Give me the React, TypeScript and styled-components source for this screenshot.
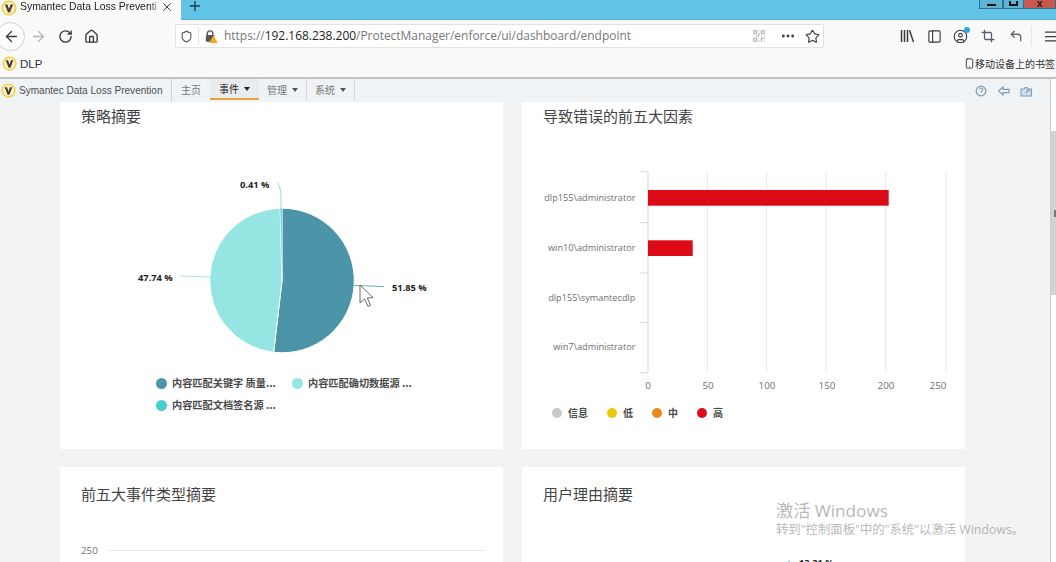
import React from 'react';
import styled, { createGlobalStyle } from 'styled-components';
import {
  ArrowLeft, ArrowRight, RotateCw, Home, Shield, MoreHorizontal, Star, QrCode,
  PanelLeft, CircleUser, Crop, CornerUpLeft, Menu, Smartphone, X, Plus,
} from 'lucide-react';

const Global = createGlobalStyle`
  html, body { margin: 0; padding: 0; background: #f3f3f3; overflow: hidden; }
  * { box-sizing: border-box; }
  #root { width: 1056px; height: 562px; }
`;

const sans = `"Liberation Sans", "Noto Sans CJK SC", sans-serif`;
const open = `"Open Sans", "Noto Sans CJK SC", sans-serif`;

const Page = styled.div`
  position: relative;
  width: 1056px;
  height: 562px;
  overflow: hidden;
  display: flex;
  flex-direction: column;
  font-family: ${sans};
`;

const TabStrip = styled.div`
  height: 20px;
  flex: none;
  display: flex;
  background: #62c5e8;
  border-bottom: 1px solid #58aecd;
`;
const Tab = styled.div`
  width: 181px;
  height: 20px;
  background: #f9f9fa;
  display: flex;
  align-items: flex-start;
  padding-left: 1px;
  color: #222;
  font-size: 10.4px;
  line-height: 13px;
`;
const TabTitle = styled.span`
  width: 139px;
  margin-left: 3px;
  white-space: nowrap;
  -webkit-mask-image: linear-gradient(90deg, #000 93%, rgba(0, 0, 0, 0.25));
  mask-image: linear-gradient(90deg, #000 93%, rgba(0, 0, 0, 0.25));
`;
const TabClose = styled.span`
  display: flex;
  margin-left: 1px;
  color: #333;
`;
const NewTab = styled.span`
  display: flex;
  margin: -2px 0 0 6px;
  height: 14px;
  color: #1c3c55;
`;
const Spacer = styled.div`
  flex: 1;
`;
const WinButton = styled.div<{ $w: number; $red?: boolean }>`
  width: ${(p) => p.$w}px;
  height: 9px;
  background: ${(p) => (p.$red ? '#c9584f' : '#5fb3d3')};
  border: 1px solid #31708c;
  border-top: none;
  border-left: ${(p) => (p.$red ? 'none' : '1px solid #31708c')};
  display: flex;
  justify-content: center;
  align-items: flex-end;
  color: #111;
`;
const MinGlyph = styled.span`
  width: 9px;
  height: 2px;
  background: #111;
  margin-bottom: 2px;
`;
const MaxGlyph = styled.span`
  width: 9px;
  height: 5px;
  border: 2px solid #111;
  border-top: none;
  margin-bottom: 2px;
`;
const CloseGlyph = styled.span`
  font: bold 11px/8px ${sans};
  color: #222;
  margin-bottom: 1px;
`;

const NavBar = styled.div`
  height: 32px;
  flex: none;
  background: #f9f9fa;
  display: flex;
  align-items: center;
`;
const BackCircle = styled.div`
  width: 29px;
  height: 29px;
  margin-left: -4px;
  border-radius: 50%;
  background: #fdfdfd;
  border: 1px solid #cfcfd2;
  display: flex;
  align-items: center;
  justify-content: center;
  padding-left: 1px;
  color: #3a3a3c;
  flex: none;
`;
const NavIcon = styled.span<{ $ml: number; $c?: string }>`
  display: flex;
  margin-left: ${(p) => p.$ml}px;
  color: ${(p) => p.$c || '#3d3d40'};
  flex: none;
`;
const UrlBar = styled.div`
  width: 649px;
  height: 24px;
  margin-left: 76px;
  flex: none;
  display: flex;
  align-items: center;
  background: #fff;
  border: 1px solid #e2e2e4;
  border-radius: 2px;
`;
const UrlDivider = styled.span`
  width: 1px;
  height: 18px;
  margin-left: 5px;
  background: #e4e4e6;
`;
const LockWrap = styled.span`
  position: relative;
  display: flex;
  width: 14px;
  height: 14px;
  margin-left: 5px;
`;
const UrlText = styled.div`
  margin-left: 6px;
  width: 526px;
  font: 11.95px/16px ${open};
  color: #77777a;
  white-space: nowrap;
`;
const UrlHost = styled.span`
  color: #1e1e20;
`;
const ToolDivider = styled.span`
  width: 1px;
  height: 20px;
  margin-left: 8px;
  background: #e6e6e8;
  flex: none;
`;
const Badge = styled.span`
  position: absolute;
  width: 6px;
  height: 6px;
  top: -2px;
  right: -2px;
  border-radius: 50%;
  background: #2aa8e0;
`;
const RelIcon = styled(NavIcon)`
  position: relative;
`;

const BookmarksBar = styled.div`
  height: 25px;
  flex: none;
  background: #f9f9fa;
  display: flex;
  align-items: center;
  padding: 0 1px 2px 2px;
  font-size: 11.5px;
  color: #333;
`;
const BookmarkLabel = styled.span`
  margin-left: 3px;
`;
const MobileMarks = styled.span`
  margin-left: auto;
  display: flex;
  align-items: center;
  font: 10px/12px ${open};
  color: #333;
  white-space: nowrap;
`;

const Viewport = styled.div`
  flex: 1;
  min-height: 0;
  display: flex;
  border-top: 2px solid #c2c2c4;
`;
const AppColumn = styled.div`
  width: 1050px;
  flex: none;
  display: flex;
  flex-direction: column;
  overflow: hidden;
`;
const Scrollbar = styled.div`
  flex: 1;
  background: #fff;
  border-left: 1px solid #c9c9c9;
  padding-top: 52px;
`;
const Thumb = styled.div`
  height: 164px;
  background: #d2d2d2;
  display: flex;
  align-items: center;
  justify-content: flex-end;
`;
const Grip = styled.span`
  width: 2px;
  height: 7px;
  background: #777;
`;
const AppNav = styled.div`
  height: 23px;
  flex: none;
  background: #eff3f6;
  display: flex;
  align-items: stretch;
  padding-left: 1px;
`;
const Brand = styled.div`
  width: 171px;
  display: flex;
  align-items: center;
  font-size: 10.05px;
  color: #4e4e4e;
  white-space: nowrap;
  border-right: 1px solid #cdd2d6;
`;
const BrandText = styled.span`
  margin-left: 3px;
`;
const NavItem = styled.div<{ $w: number; $active?: boolean; $line?: boolean }>`
  width: ${(p) => p.$w}px;
  display: flex;
  align-items: center;
  justify-content: center;
  gap: 5px;
  font: 10px/12px ${open};
  color: ${(p) => (p.$active ? '#222' : '#777')};
  background: ${(p) => (p.$active ? '#e9ecee' : 'transparent')};
  border-bottom: 2px solid ${(p) => (p.$active ? '#efa233' : 'transparent')};
  border-right: ${(p) => (p.$line ? '1px solid #d4d8dc' : 'none')};
  margin-bottom: ${(p) => (p.$active ? '2px' : '0')};
`;
const Caret = styled.span<{ $dark?: boolean }>`
  width: 0;
  height: 0;
  border-left: 3.5px solid transparent;
  border-right: 3.5px solid transparent;
  border-top: 4px solid ${(p) => (p.$dark ? '#222' : '#555')};
`;
const AppTools = styled.div`
  margin-left: auto;
  display: flex;
  align-items: center;
  gap: 10px;
  padding-right: 17px;
`;

const Scroll = styled.div`
  flex: 1;
  min-height: 0;
  display: grid;
  grid-template-columns: 443px 443px;
  grid-auto-rows: max-content;
  column-gap: 19px;
  row-gap: 18px;
  padding-left: 60px;
  background: #f3f3f3;
`;
const Card = styled.section<{ $h: number }>`
  height: ${(p) => p.$h}px;
  background: #fff;
  display: flex;
  flex-direction: column;
`;
const CardTitle = styled.h2<{ $top: number }>`
  margin: ${(p) => p.$top}px 0 0 21px;
  height: 24px;
  font: 400 15px/24px "Noto Sans CJK SC", sans-serif;
  color: #444;
`;
const Chart = styled.svg`
  display: block;
  flex: none;
  font-family: ${open};
`;
const PieLegend = styled.div`
  display: grid;
  grid-template-columns: 136px 136px;
  grid-auto-rows: 22px;
  margin: 2px 0 0 96px;
`;
const BarLegend = styled.div`
  display: flex;
  gap: 19px;
  height: 22px;
  margin: 3px 0 0 30px;
`;
const LegendItem = styled.div<{ $gap: number; $size: number }>`
  display: flex;
  align-items: center;
  gap: ${(p) => p.$gap}px;
  font: 700 ${(p) => p.$size}px/14px "Noto Sans CJK SC", sans-serif;
  color: #4a4a4a;
  white-space: nowrap;
`;
const Dot = styled.span<{ $c: string; $d: number }>`
  width: ${(p) => p.$d}px;
  height: ${(p) => p.$d}px;
  border-radius: 50%;
  background: ${(p) => p.$c};
  flex: none;
`;
const Watermark = styled.div`
  position: absolute;
  left: 776px;
  top: 498px;
  color: rgba(120, 120, 120, 0.55);
  font-family: ${open};
  pointer-events: none;
`;
const WmTitle = styled.div`
  font-size: 17.2px;
  line-height: 25px;
`;
const WmSub = styled.div`
  font-size: 12.35px;
  line-height: 14px;
  white-space: nowrap;
`;

const Logo: React.FC<{ size?: number }> = ({ size = 16 }) => (
  <svg width={size} height={size} viewBox="0 0 16 16" style={{ flex: 'none' }}>
    <circle cx="8" cy="8" r="7.6" fill="#f5cd4a" />
    <circle cx="8" cy="8" r="5.9" fill="#fbf3d2" />
    <path d="M3.9 4.4h2.6L8 9l1.5-4.6h2.6L9 12.4H7z" fill="#4a3f24" />
  </svg>
);

const polar = (cx: number, cy: number, r: number, pct: number) => {
  const a = (pct / 100) * 2 * Math.PI;
  return [cx + r * Math.sin(a), cy - r * Math.cos(a)];
};
const slice = (cx: number, cy: number, r: number, from: number, to: number) => {
  const [x1, y1] = polar(cx, cy, r, from);
  const [x2, y2] = polar(cx, cy, r, to);
  const large = to - from > 50 ? 1 : 0;
  return `M${cx} ${cy}L${x1} ${y1}A${r} ${r} 0 ${large} 1 ${x2} ${y2}Z`;
};

const PieChart = () => {
  // card-relative: x - 60, y - 128
  const cx = 222;
  const cy = 152.5;
  const r = 72.3;
  return (
    <Chart width={443} height={242} viewBox="0 0 443 242">
      <path d={slice(cx, cy, r, 0, 51.85)} fill="#4c95a8" stroke="#fff" strokeWidth="1" />
      <path d={slice(cx, cy, r, 51.85, 99.59)} fill="#95e5e2" stroke="#fff" strokeWidth="1" />
      <path d={slice(cx, cy, r, 99.59, 100)} fill="#45cfcf" stroke="#fff" strokeWidth="0.4" />
      <path d="M221 80 C221 66 221.500 60 217 55" fill="none" stroke="#95dcdc" strokeWidth="1" />
      <line x1="150" y1="149" x2="120" y2="148" stroke="#a6e6e3" strokeWidth="1" />
      <line x1="294" y1="157.500" x2="324" y2="158.500" stroke="#6fa9b8" strokeWidth="1" />
      <g fontSize="9.300" fontWeight="700" fill="#222">
        <text x="180" y="60">0.41 %</text>
        <text x="78" y="153">47.74 %</text>
        <text x="332" y="163">51.85 %</text>
      </g>
      <path d="M300 157 L300 175 L304.500 171 L308 178.500 L310.500 177.200 L307.300 170 L313 169.500 Z" fill="#fff" stroke="#444" strokeWidth="0.8" />
    </Chart>
  );
};

const BarChart = () => {
  // card-relative: x - 522, y - 128
  const ox = 126;
  const grid = [185.3, 244.7, 304, 363.7, 424];
  const ticks = [43.7, 94.7, 145, 194.5, 244.7];
  const names: [string, number][] = [
    ['dlp155\\administrator', 72.500],
    ['win10\\administrator', 122.500],
    ['dlp155\\symantecdlp', 173],
    ['win7\\administrator', 222],
  ];
  const axis: [string, number][] = [['0', 126], ['50', 186], ['100', 245], ['150', 305], ['200', 364], ['250', 416]];
  return (
    <Chart width={443} height={271} viewBox="0 0 443 271">
      {grid.map((x) => (
        <line key={x} x1={x} x2={x} y1={43.7} y2={244.7} stroke="#e8e8e8" strokeWidth="1" />
      ))}
      <line x1={ox} x2={ox} y1={43.7} y2={244.7} stroke="#d4d4d4" strokeWidth="1" />
      {ticks.map((y) => (
        <line key={y} x1={118} x2={ox} y1={y} y2={y} stroke="#d8d8d8" strokeWidth="1" />
      ))}
      <rect x={ox} y={62} width={240.700} height={15.700} fill="#dd0a18" />
      <rect x={ox} y={112.300} width={44.700} height={15.700} fill="#dd0a18" />
      <g fontSize="9.200" fill="#707070" textAnchor="end">
        {names.map(([n, y]) => (
          <text key={n} x={113.500} y={y}>{n}</text>
        ))}
      </g>
      <g fontSize="9.800" fill="#707070" textAnchor="middle">
        {axis.map(([n, x]) => (
          <text key={n} x={x} y={260.500}>{n}</text>
        ))}
      </g>
    </Chart>
  );
};

const ColumnChart = () => (
  <Chart width={443} height={70} viewBox="0 0 443 70">
    <text x="21" y="48" fontSize="9.800" fill="#707070">250</text>
    <line x1="49" x2="424" y1="44.500" y2="44.500" stroke="#e6e6e6" strokeWidth="1" />
  </Chart>
);

const ReasonChart = () => (
  <Chart width={443} height={70} viewBox="0 0 443 70">
    <path d="M264 57 L268 55" stroke="#7fbfc8" strokeWidth="1" fill="none" />
    <text x="277" y="60" fontSize="9.300" fontWeight="700" fill="#222">13.31 %</text>
  </Chart>
);

export default function App() {
  return (
    <Page>
      <Global />
      <TabStrip>
        <Tab>
          <Logo />
          <TabTitle>Symantec Data Loss Preventi</TabTitle>
          <TabClose><X size={14} strokeWidth={1.600} /></TabClose>
        </Tab>
        <NewTab><Plus size={16} strokeWidth={2} /></NewTab>
        <Spacer />
        <WinButton $w={24}><MinGlyph /></WinButton>
        <WinButton $w={21}><MaxGlyph /></WinButton>
        <WinButton $w={32} $red><CloseGlyph>x</CloseGlyph></WinButton>
      </TabStrip>
      <NavBar>
        <BackCircle><ArrowLeft size={17} strokeWidth={1.800} /></BackCircle>
        <NavIcon $ml={5} $c="#b5b5b8"><ArrowRight size={17} strokeWidth={1.800} /></NavIcon>
        <NavIcon $ml={11}><RotateCw size={15} strokeWidth={2.200} /></NavIcon>
        <NavIcon $ml={11}><Home size={15} strokeWidth={2.200} /></NavIcon>
        <UrlBar>
          <NavIcon $ml={4} $c="#55555a"><Shield size={13} strokeWidth={2} /></NavIcon>
          <UrlDivider />
          <LockWrap>
            <svg width="15" height="15" viewBox="0 0 15 15">
              <path d="M3.500 6V4.500a3 3 0 0 1 6 0V6" fill="none" stroke="#555" strokeWidth="1.500" />
              <rect x="2" y="6" width="9" height="7" rx="1" fill="#555" />
              <path d="M10 6.500L15 14.500H5.500z" fill="#f0b020" />
            </svg>
          </LockWrap>
          <UrlText>https://<UrlHost>192.168.238.200</UrlHost>/ProtectManager/enforce/ui/dashboard/endpoint</UrlText>
          <NavIcon $ml={2} $c="#a5a5a8"><QrCode size={14} strokeWidth={1.800} /></NavIcon>
          <NavIcon $ml={14}><MoreHorizontal size={16} strokeWidth={2.400} /></NavIcon>
          <NavIcon $ml={9}><Star size={15} strokeWidth={1.800} /></NavIcon>
        </UrlBar>
        <NavIcon $ml={76}>
          <svg width="15" height="14" viewBox="0 0 15 14">
            <path d="M1.500 1v12M4.500 1v12M7.500 1v12M9.500 1.200l4 11.800" fill="none" stroke="currentColor" strokeWidth="1.500" />
          </svg>
        </NavIcon>
        <NavIcon $ml={12}><PanelLeft size={15} strokeWidth={1.800} /></NavIcon>
        <RelIcon $ml={11}><CircleUser size={15} strokeWidth={1.800} /><Badge /></RelIcon>
        <NavIcon $ml={13} $c="#55606a"><Crop size={14} strokeWidth={2.200} /></NavIcon>
        <NavIcon $ml={14} $c="#666"><CornerUpLeft size={14} strokeWidth={2.400} /></NavIcon>
        <ToolDivider />
        <NavIcon $ml={11}><Menu size={15} strokeWidth={2} /></NavIcon>
      </NavBar>
      <BookmarksBar>
        <Logo size={15} />
        <BookmarkLabel>DLP</BookmarkLabel>
        <MobileMarks><Smartphone size={11} strokeWidth={2} />移动设备上的书签</MobileMarks>
      </BookmarksBar>
      <Viewport>
        <AppColumn>
          <AppNav>
            <Brand><Logo size={15} /><BrandText>Symantec Data Loss Prevention</BrandText></Brand>
            <NavItem $w={38}>主页</NavItem>
            <NavItem $w={49} $active>事件<Caret $dark /></NavItem>
            <NavItem $w={48} $line>管理<Caret /></NavItem>
            <NavItem $w={48} $line>系统<Caret /></NavItem>
            <AppTools>
              <svg width="12" height="12" viewBox="0 0 12 12">
                <circle cx="6" cy="6" r="4.800" fill="none" stroke="#7f9db5" strokeWidth="1.300" />
                <path d="M4.500 4.600a1.600 1.600 0 1 1 2.200 1.500L6 7.500" fill="none" stroke="#7f9db5" strokeWidth="1.200" />
              </svg>
              <svg width="13" height="12" viewBox="0 0 13 12">
                <path d="M6 2L1.500 6 6 10V7.700h6V4.300H6z" fill="none" stroke="#7f9db5" strokeWidth="1.200" />
              </svg>
              <svg width="13" height="12" viewBox="0 0 13 12">
                <path d="M1 4h3l1-1.500h2V4h4.500v7H1z" fill="#cfdeea" stroke="#7f9db5" strokeWidth="1.100" />
                <path d="M6 8l3-4M9 4v2.500" fill="none" stroke="#7f9db5" strokeWidth="1.100" />
              </svg>
            </AppTools>
          </AppNav>
          <Scroll>
            <Card $h={347}>
              <CardTitle $top={2}>策略摘要</CardTitle>
              <PieChart />
              <PieLegend>
                <LegendItem $gap={5} $size={10.2}><Dot $c="#4c95a8" $d={11} />内容匹配关键字 质量...</LegendItem>
                <LegendItem $gap={5} $size={10.2}><Dot $c="#95e5e2" $d={11} />内容匹配确切数据源 ...</LegendItem>
                <LegendItem $gap={5} $size={10.2}><Dot $c="#45cfcf" $d={11} />内容匹配文档签名源 ...</LegendItem>
              </PieLegend>
            </Card>
            <Card $h={347}>
              <CardTitle $top={2}>导致错误的前五大因素</CardTitle>
              <BarChart />
              <BarLegend>
                <LegendItem $gap={6} $size={10}><Dot $c="#c8c8c8" $d={10} />信息</LegendItem>
                <LegendItem $gap={6} $size={10}><Dot $c="#eac80e" $d={10} />低</LegendItem>
                <LegendItem $gap={6} $size={10}><Dot $c="#e8891a" $d={10} />中</LegendItem>
                <LegendItem $gap={6} $size={10}><Dot $c="#dc0a1a" $d={10} />高</LegendItem>
              </BarLegend>
            </Card>
            <Card $h={300}>
              <CardTitle $top={15}>前五大事件类型摘要</CardTitle>
              <ColumnChart />
            </Card>
            <Card $h={300}>
              <CardTitle $top={15}>用户理由摘要</CardTitle>
              <ReasonChart />
            </Card>
          </Scroll>
        </AppColumn>
        <Scrollbar>
          <Thumb><Grip /></Thumb>
        </Scrollbar>
      </Viewport>
      <Watermark>
        <WmTitle>激活 Windows</WmTitle>
        <WmSub>转到"控制面板"中的"系统"以激活 Windows。</WmSub>
      </Watermark>
    </Page>
  );
}
